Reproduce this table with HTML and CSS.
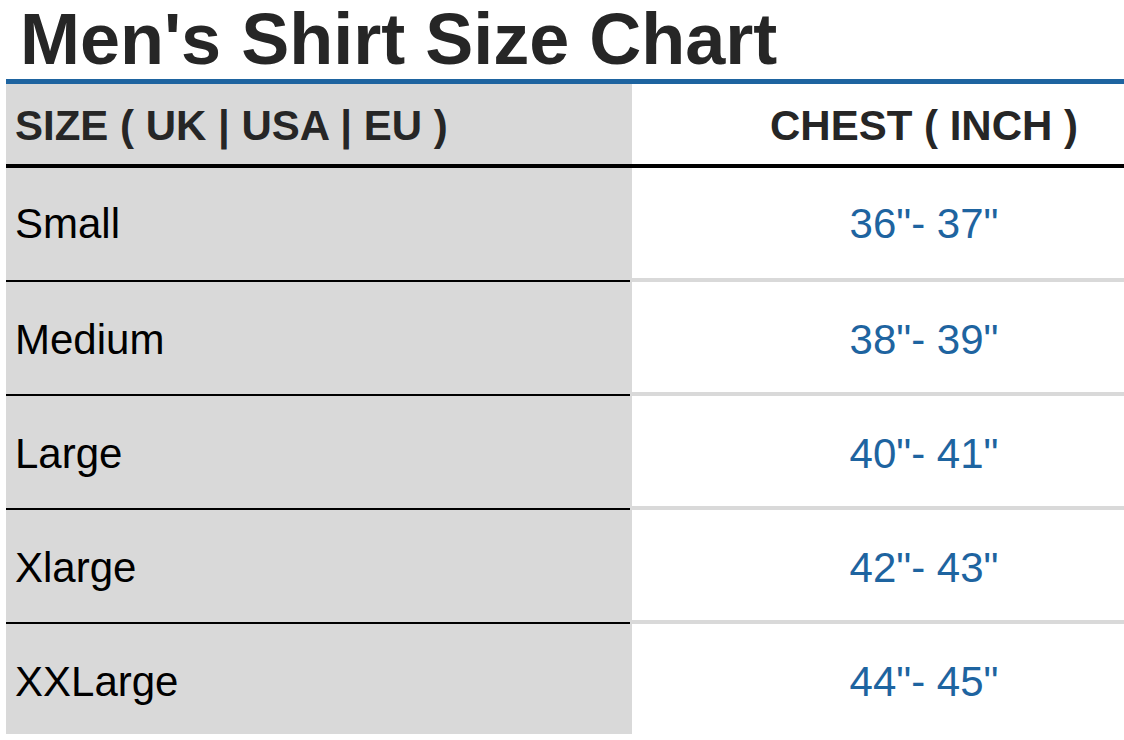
FILE: index.html
```html
<!DOCTYPE html>
<html lang="en">
<head>
<meta charset="utf-8">
<title>Men's Shirt Size Chart</title>
<link rel="stylesheet" href="styles.css">
</head>
<body>
<div class="chart">
  <h1 class="chart-title">Men's Shirt Size Chart</h1>
  <table class="size-table">
    <thead>
      <tr>
        <th class="col-size">SIZE ( UK | USA | EU )</th>
        <th class="col-chest">CHEST ( INCH )</th>
      </tr>
    </thead>
    <tbody>
      <tr><td class="col-size">Small</td><td class="col-chest">36"- 37"</td></tr>
      <tr><td class="col-size">Medium</td><td class="col-chest">38"- 39"</td></tr>
      <tr><td class="col-size">Large</td><td class="col-chest">40"- 41"</td></tr>
      <tr><td class="col-size">Xlarge</td><td class="col-chest">42"- 43"</td></tr>
      <tr><td class="col-size">XXLarge</td><td class="col-chest">44"- 45"</td></tr>
    </tbody>
  </table>
</div>
</body>
</html>
```

FILE: styles.css
```css
html, body {
  margin: 0;
  padding: 0;
  overflow: hidden;
  background: #ffffff;
  font-family: "Liberation Sans", Arial, Helvetica, sans-serif;
}

.chart {
  margin-left: 6px;
  width: 1210px;
}

.chart-title {
  margin: 0;
  padding-left: 14px;
  font-size: 72px;
  line-height: 79px;
  font-weight: 700;
  color: #262626;
  border-bottom: 5px solid #1e64a0;
}

.size-table {
  width: 1210px;
  border-collapse: separate;
  border-spacing: 0;
  table-layout: fixed;
}

.size-table th,
.size-table td {
  box-sizing: border-box;
  vertical-align: middle;
}

.size-table th {
  height: 84px;
  padding: 3px 9px 0;
  font-size: 42px;
  font-weight: 700;
  color: #262626;
  border-bottom: 4px solid #000000;
}

.size-table td {
  height: 114px;
  padding: 6px 9px 0;
  font-size: 42px;
  font-weight: 400;
  border-top: 4px solid #d9d9d9;
}

.size-table tbody tr:first-child td {
  height: 110px;
  padding-top: 2px;
  border-top: none;
}

.size-table .col-size {
  width: 626px;
  text-align: left;
  background-color: #d9d9d9;
}

.size-table td.col-size {
  color: #000000;
  border-top-color: transparent;
  background: linear-gradient(#000000, #000000) 0 2px / calc(100% - 2px) 2px no-repeat border-box, #d9d9d9;
}

.size-table tbody tr:first-child td.col-size {
  background: #d9d9d9;
}

.size-table .col-chest {
  text-align: center;
  background-color: #ffffff;
}

.size-table td.col-chest {
  color: #1e64a0;
}
```
